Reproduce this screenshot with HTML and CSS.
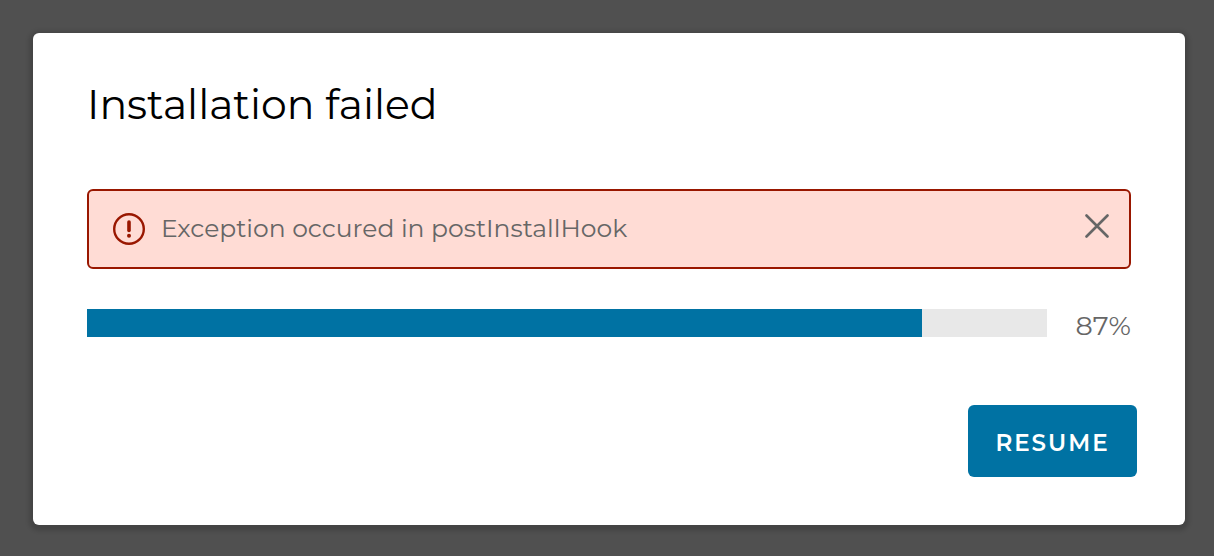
FILE: index.html
```
<!DOCTYPE html>
<html lang="en">
<head>
<meta charset="utf-8">
<title>Installation failed</title>
<link rel="stylesheet" href="styles.css">
</head>
<body>
<main class="dialog" role="dialog" aria-labelledby="title">
  <h1 class="title" id="title">Installation failed</h1>
  <div class="alert" role="alert">
    <svg class="alert-icon" viewBox="0 0 32 32" aria-hidden="true">
      <circle cx="16" cy="16" r="14.800" fill="none" stroke="currentColor" stroke-width="2.400"/>
      <path d="M16 9v8.500" fill="none" stroke="currentColor" stroke-width="3.600" stroke-linecap="round"/>
      <circle cx="16" cy="22.800" r="2" fill="currentColor"/>
    </svg>
    <span class="alert-text">Exception occured in postInstallHook</span>
    <button class="close" type="button" aria-label="Close">
      <svg class="close-icon" viewBox="0 0 24 24" aria-hidden="true"><path d="M1.500 1.500l21 21M22.500 1.500l-21 21" fill="none" stroke="currentColor" stroke-width="2.600" stroke-linecap="round"/></svg>
    </button>
  </div>
  <div class="progress-row">
    <progress class="progress" id="progress" max="100" value="87" aria-label="Installation progress"></progress>
    <label class="percent" for="progress">87%</label>
  </div>
  <div class="actions"><button class="resume" type="button">RESUME</button></div>
</main>
</body>
</html>
```
FILE: styles.css
```
* { box-sizing: border-box; }
body {
  margin: 0;
  padding: 33px 29px 31px 33px;
  min-height: 100vh;
  background: #505050;
  color: #666;
  font-family: "Montserrat", "Metropolis", "Inter", sans-serif;
}
.dialog {
  padding: 48px;
  padding-left: 54px;
  border-radius: 6px;
  background: #fff;
  box-shadow: 0 2px 4px 4px rgba(0, 0, 0, 0.15);
}
.title {
  margin: 0;
  color: #000;
  font-size: 41px;
  font-weight: 400;
  line-height: 46px;
}
.alert {
  display: flex;
  align-items: center;
  gap: 16px;
  height: 80px;
  margin: 62px 6px 0 0;
  padding: 0 20px 0 24px;
  border: 2px solid #991700;
  border-radius: 6px;
  background: #ffdcd5;
}
.alert-icon { flex: none; width: 32px; height: 32px; color: #991700; }
.alert-text { flex: 1; padding-bottom: 2px; font-size: 25px; font-weight: 400; line-height: 36px; }
.close {
  display: flex;
  padding: 0 0 6px;
  border: 0;
  background: none;
  color: #666;
}
.close-icon { width: 24px; height: 24px; }
.progress-row {
  display: flex;
  align-items: flex-start;
  gap: 28px;
  margin: 40px 6px 0 0;
}
.progress {
  flex: 1;
  height: 28px;
  border: 0;
  background: #e8e8e8;
  appearance: none;
}
.progress::-webkit-progress-bar { background: #e8e8e8; }
.progress::-webkit-progress-value { background: #0072a3; }
.percent { min-width: 56px; text-align: right; font-size: 27px; font-weight: 400; line-height: 34px; }
.actions { display: flex; justify-content: flex-end; margin-top: 62px; }
.resume {
  min-width: 169px;
  height: 72px;
  padding: 4px 26px 0;
  border: 0;
  border-radius: 6px;
  background: #0072a3;
  color: #fff;
  font: inherit;
  font-size: 23px;
  font-weight: 600;
  letter-spacing: 2px;
}
```
